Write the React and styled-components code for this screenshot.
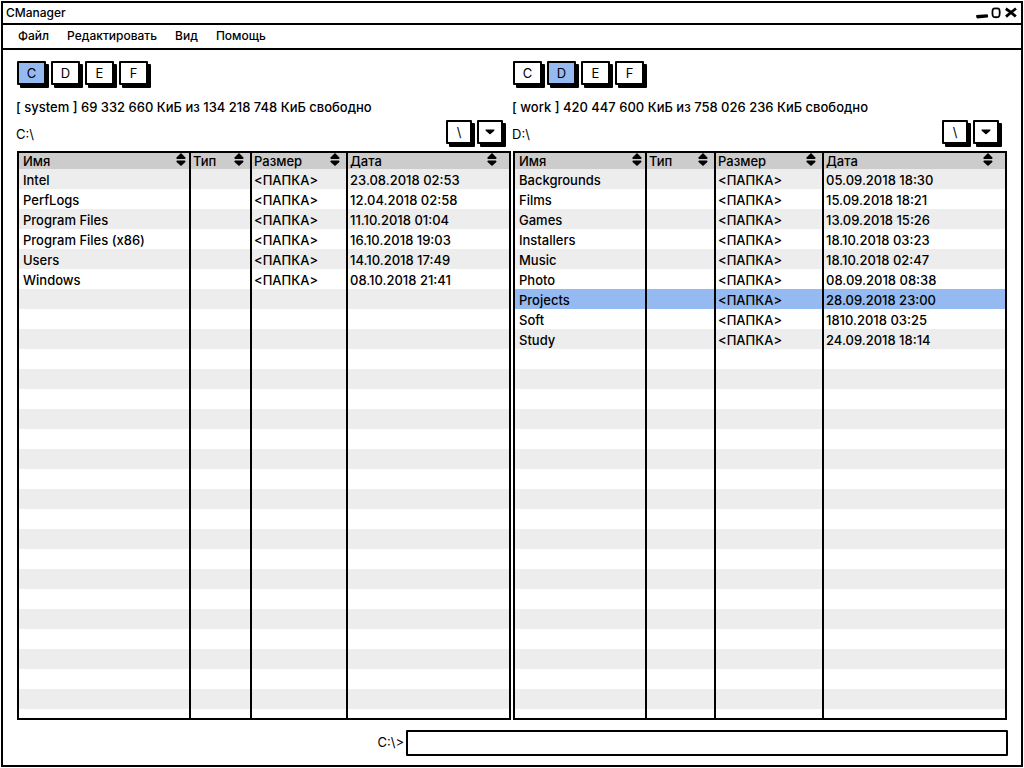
import React from "react";
import styled, { createGlobalStyle } from "styled-components";

const ink = "#000";
const accent = "#94baf1";
const ROW_COUNT = 27;

const GlobalStyle = createGlobalStyle`
  *, *::before, *::after { box-sizing: border-box; }
  body {
    margin: 0;
    background: #fff;
    color: ${ink};
    font-family: Inter, "Open Sans", "Liberation Sans", sans-serif;
    font-size: 13px;
    line-height: 16px;
  }
  button, input { font: inherit; color: inherit; }
`;

const Window = styled.div`
  display: flex;
  flex-direction: column;
  min-height: calc(100vh - 2px);
  margin: 1px;
  border: 2px solid ${ink};
`;

const TitleBar = styled.header`
  display: flex;
  align-items: center;
  justify-content: space-between;
  height: 22px;
  padding: 0 4px 0 3px;
  border-bottom: 2px solid ${ink};
`;

const Title = styled.h1`
  margin: 0;
  font-size: 12px;
  font-weight: 500;
`;

const WindowControls = styled.div`
  display: flex;
  gap: 2px;
`;

const ControlButton = styled.button`
  display: flex;
  padding: 0;
  border: 0;
  background: none;
`;

const MenuBar = styled.nav`
  display: flex;
  align-items: center;
  gap: 18px;
  height: 25px;
  padding: 0 15px 2px;
  border-bottom: 2px solid ${ink};
`;

const MenuItem = styled.button`
  padding: 0;
  border: 0;
  background: none;
  font-size: 12px;
  font-weight: 500;
`;

const Panels = styled.main`
  display: grid;
  grid-template-columns: 1fr 1fr;
  padding: 11px 13px 0;
`;

const Panel = styled.section`
  min-width: 0;
`;

const DriveBar = styled.div`
  display: flex;
  gap: 5px;
  padding-left: 1px;
`;

const SketchButton = styled.button`
  display: flex;
  align-items: center;
  justify-content: center;
  width: ${(p) => (p.$small ? 26 : 29)}px;
  height: 24px;
  padding: 0;
  border: 2px solid ${ink};
  border-radius: 1px;
  background: ${(p) => (p.$active ? accent : "#fff")};
  box-shadow: 3px 3px 0 ${ink};
`;

const DiskInfo = styled.p`
  margin: 14px 0 5px;
  font-weight: 500;
  white-space: nowrap;
`;

const PathBar = styled.div`
  display: flex;
  align-items: center;
  gap: 5px;
  height: 24px;
  margin-bottom: 7px;
  padding-right: 9px;
`;

const Path = styled.span`
  flex: 1;
  padding-top: 4px;
`;

const TableFrame = styled.div`
  margin: 0 1px;
  border: 2px solid ${ink};
`;

const FileTable = styled.table`
  width: 100%;
  table-layout: fixed;
  border-collapse: separate;
  border-spacing: 0;
`;

const HeadCell = styled.th`
  height: 16px;
  padding: 0;
  background: #ccc;
  font-weight: 500;
  & + & { border-left: 2px solid ${ink}; }
`;

const SortButton = styled.button`
  display: flex;
  align-items: flex-start;
  justify-content: space-between;
  width: 100%;
  height: 16px;
  padding: 0 ${(p) => p.$end}px 0 ${(p) => p.$start}px;
  border: 0;
  background: none;
  font-weight: 500;
`;

const Row = styled.tr`
  height: 20px;
  background: ${(p) => (p.$selected ? accent : p.$striped ? "#ededed" : "#fff")};
`;

const EndRow = styled.tr`
  height: 9px;
`;

const Cell = styled.td`
  padding: 2px 0 0 2px;
  font-weight: 500;
  white-space: nowrap;
  &:first-child { padding-left: 4px; }
  & + & { border-left: 2px solid ${ink}; }
`;

const CommandLine = styled.footer`
  display: grid;
  grid-template-columns: 388px 1fr;
  gap: 2px;
  align-items: center;
  padding: 10px 13px 9px;
`;

const CommandLabel = styled.label`
  padding-bottom: 2px;
  text-align: right;
`;

const CommandInput = styled.input`
  width: 100%;
  height: 26px;
  padding: 0 6px;
  border: 2px solid ${ink};
  border-radius: 1px;
  background: #fff;
`;

const SortIcon = () => (
  <svg width="10" height="14" viewBox="0 0 10 14" aria-hidden="true">
    <path d="M5 0 L9.4 4.4 Q9.9 5.7 8.6 5.9 H1.2 Q0 5.7 0.5 4.4 Z" />
    <path d="M5 13 L9.4 9 Q9.9 7.6 8.6 7.4 H1.2 Q0 7.6 0.5 9 Z" />
  </svg>
);

const CaretIcon = () => (
  <svg width="10" height="6" viewBox="0 0 10 6" aria-hidden="true">
    <path d="M0.6 0.4 H9.4 Q9.8 1.2 9 1.9 L5.6 5 Q5 5.5 4.4 5 L1 1.9 Q0.2 1.2 0.6 0.4 Z" />
  </svg>
);

const MinimizeIcon = () => (
  <svg width="13" height="12" viewBox="0 0 13 12" aria-hidden="true">
    <path d="M0.4 7.9 L11.4 7.2 Q12.8 8.9 11.6 10.6 L1.2 11.6 Q-0.4 10.2 0.4 7.9 Z" />
  </svg>
);

const MaximizeIcon = () => (
  <svg width="12" height="12" viewBox="0 0 12 12" fill="none" stroke={ink} strokeWidth="1.8" aria-hidden="true">
    <path d="M2.4 1.7 Q5.2 0.9 7.8 1.7 Q8.8 2.4 8.7 5.6 Q8.8 9.2 7.6 9.9 Q5 10.6 2.5 9.8 Q1.3 9 1.5 5.8 Q1.2 2.8 2.4 1.7 Z" />
  </svg>
);

const CloseIcon = () => (
  <svg width="12" height="12" viewBox="0 0 12 12" fill="none" stroke={ink} strokeWidth="2.8" aria-hidden="true">
    <path d="M0.8 1.8 Q5.5 4.6 10.8 9.6" />
    <path d="M11 1.5 Q6.4 5 1 9.6" />
  </svg>
);

const columns = [
  { title: "Имя", start: 4, end: 3 },
  { title: "Тип", start: 2, end: 6 },
  { title: "Размер", start: 2, end: 6 },
  { title: "Дата", start: 2, end: 12 },
];

const panels = [
  {
    drive: "C",
    info: "[ system ] 69 332 660 КиБ из 134 218 748 КиБ свободно",
    widths: [170, 61, 96],
    files: [
      ["Intel", "23.08.2018 02:53"],
      ["PerfLogs", "12.04.2018 02:58"],
      ["Program Files", "11.10.2018 01:04"],
      ["Program Files (x86)", "16.10.2018 19:03"],
      ["Users", "14.10.2018 17:49"],
      ["Windows", "08.10.2018 21:41"],
    ],
  },
  {
    drive: "D",
    info: "[ work ] 420 447 600 КиБ из 758 026 236 КиБ свободно",
    widths: [130, 69, 108],
    selected: "Projects",
    files: [
      ["Backgrounds", "05.09.2018 18:30"],
      ["Films", "15.09.2018 18:21"],
      ["Games", "13.09.2018 15:26"],
      ["Installers", "18.10.2018 03:23"],
      ["Music", "18.10.2018 02:47"],
      ["Photo", "08.09.2018 08:38"],
      ["Projects", "28.09.2018 23:00"],
      ["Soft", "1810.2018 03:25"],
      ["Study", "24.09.2018 18:14"],
    ],
  },
];

function FilePanel({ drive, info, widths, files, selected }) {
  const rows = Array.from({ length: ROW_COUNT }, (_, i) => files[i]);
  return (
    <Panel>
      <DriveBar>
        {["C", "D", "E", "F"].map((d) => (
          <SketchButton key={d} type="button" $active={d === drive} aria-pressed={d === drive}>
            {d}
          </SketchButton>
        ))}
      </DriveBar>
      <DiskInfo>{info}</DiskInfo>
      <PathBar>
        <Path>{drive + ":\\"}</Path>
        <SketchButton type="button" $small>{"\\"}</SketchButton>
        <SketchButton type="button" $small aria-label="История"><CaretIcon /></SketchButton>
      </PathBar>
      <TableFrame>
        <FileTable>
          <colgroup>
            {widths.map((w, i) => <col key={i} width={w} />)}
            <col />
          </colgroup>
          <thead>
            <tr>
              {columns.map((c) => (
                <HeadCell key={c.title} scope="col">
                  <SortButton type="button" $start={c.start} $end={c.end}>
                    {c.title}
                    <SortIcon />
                  </SortButton>
                </HeadCell>
              ))}
            </tr>
          </thead>
          <tbody>
            {rows.map((f, i) => (
              <Row key={i} $striped={i % 2 === 0} $selected={!!f && f[0] === selected}>
                <Cell>{f && f[0]}</Cell>
                <Cell />
                <Cell>{f && "<ПАПКА>"}</Cell>
                <Cell>{f && f[1]}</Cell>
              </Row>
            ))}
            <EndRow>
              <Cell /><Cell /><Cell /><Cell />
            </EndRow>
          </tbody>
        </FileTable>
      </TableFrame>
    </Panel>
  );
}

export default function App() {
  return (
    <>
      <GlobalStyle />
      <Window>
        <TitleBar>
          <Title>CManager</Title>
          <WindowControls>
            <ControlButton type="button" aria-label="Свернуть"><MinimizeIcon /></ControlButton>
            <ControlButton type="button" aria-label="Развернуть"><MaximizeIcon /></ControlButton>
            <ControlButton type="button" aria-label="Закрыть"><CloseIcon /></ControlButton>
          </WindowControls>
        </TitleBar>
        <MenuBar>
          {["Файл", "Редактировать", "Вид", "Помощь"].map((m) => (
            <MenuItem key={m} type="button">{m}</MenuItem>
          ))}
        </MenuBar>
        <Panels>
          {panels.map((p) => <FilePanel key={p.drive} {...p} />)}
        </Panels>
        <CommandLine>
          <CommandLabel htmlFor="command">{"C:\\>"}</CommandLabel>
          <CommandInput id="command" type="text" />
        </CommandLine>
      </Window>
    </>
  );
}
